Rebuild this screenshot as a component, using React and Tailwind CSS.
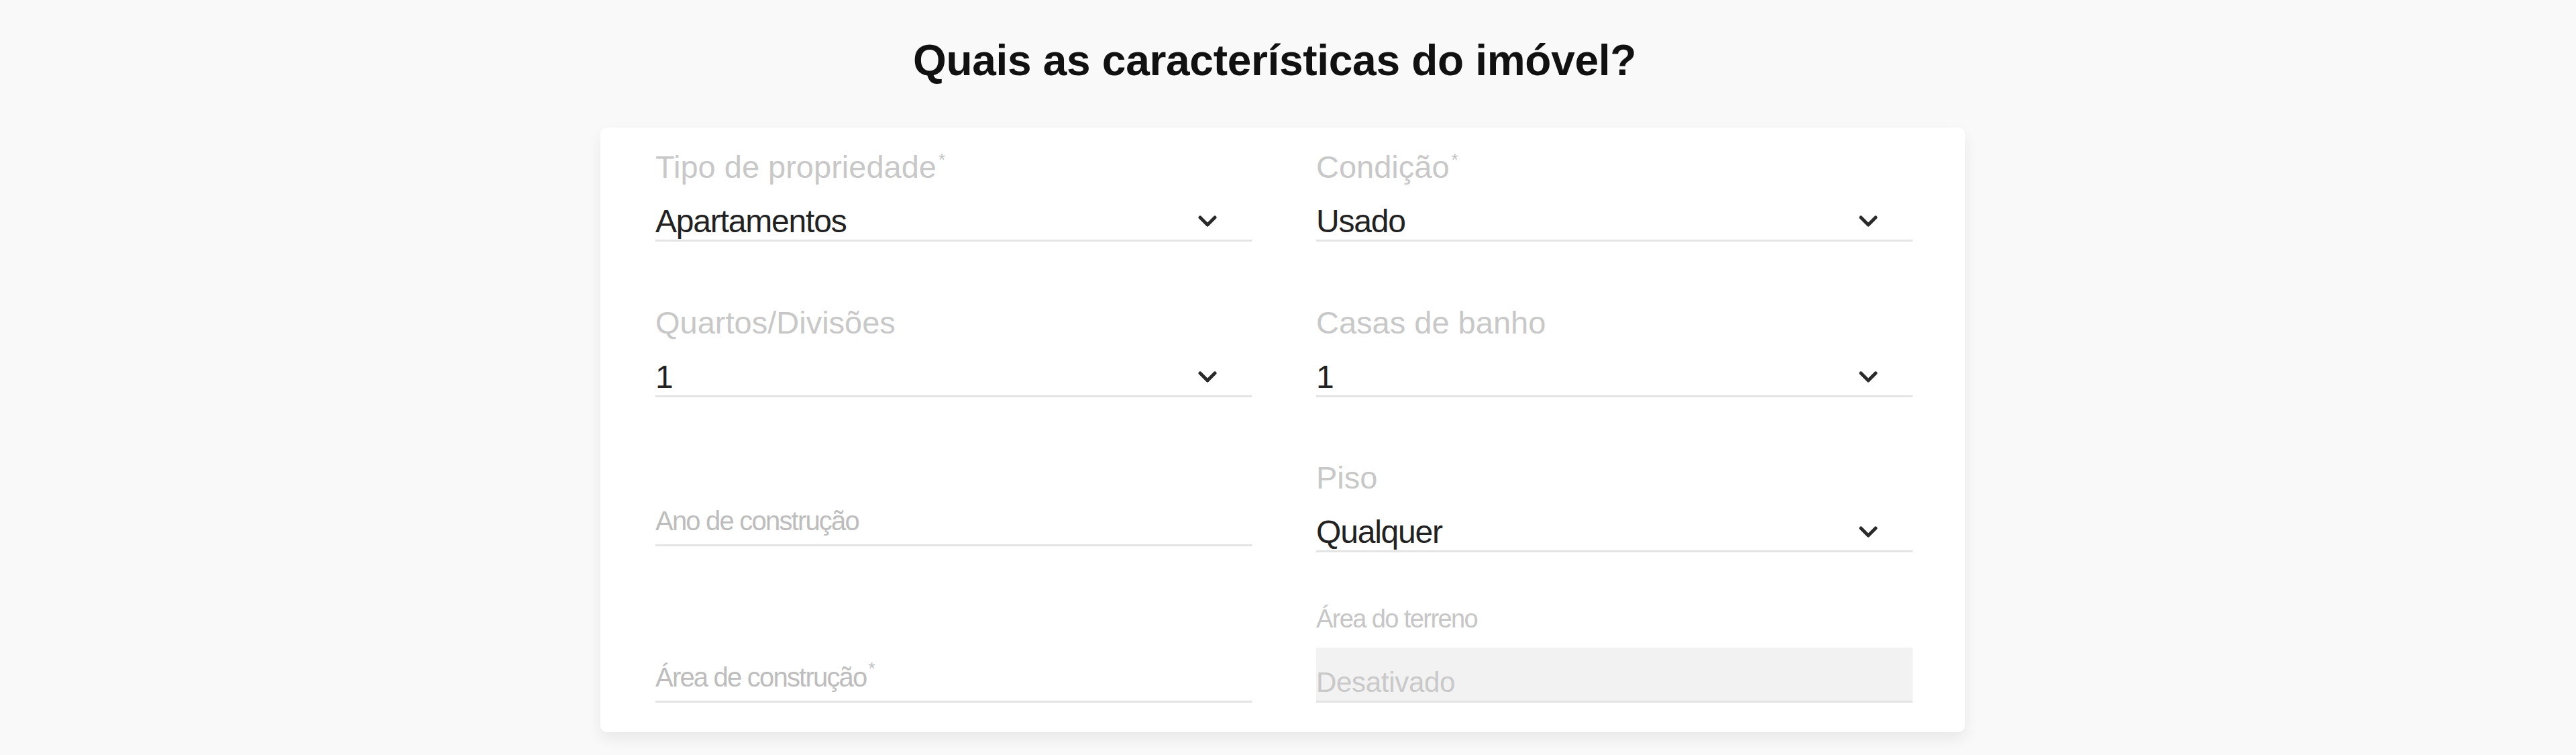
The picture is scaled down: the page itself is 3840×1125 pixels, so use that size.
const font = { fontFamily: '"Liberation Sans", Arial, sans-serif' };

const Chevron = () => (
  <svg width="28" height="18" viewBox="0 0 28 18" fill="none" className="shrink-0">
    <polyline points="3,3 14,14 25,3" stroke="#2a2a2a" strokeWidth="5" strokeLinecap="round" strokeLinejoin="round" />
  </svg>
);

const Required = () => (
  <span className="relative -top-[18px] ml-[3px] text-[26px] leading-none text-[#c2c2c2]">*</span>
);

const SelectField = ({ label, value, required }) => (
  <div className="flex flex-col">
    <div className="h-[56px] text-[47px] leading-[56px] text-[#c8c8c8] whitespace-nowrap">
      {label}
      {required && <Required />}
    </div>
    <div className="mt-[26px] flex h-[57px] items-center justify-between border-b-[3px] border-[#e4e4e4] pr-[52px]">
      <span className="text-[48px] leading-[56px] tracking-[-1.2px] text-[#222]">{value}</span>
      <Chevron />
    </div>
  </div>
);

const TextField = ({ placeholder, required, className = '' }) => (
  <div className={`border-b-[3px] border-[#e4e4e4] pb-[11px] ${className}`}>
    <div className="h-[48px] text-[40px] leading-[48px] tracking-[-1.8px] text-[#bdbdbd] whitespace-nowrap">
      {placeholder}
      {required && <Required />}
    </div>
  </div>
);

const DisabledField = ({ label, value }) => (
  <div className="flex flex-col">
    <div className="h-[46px] text-[38px] leading-[46px] tracking-[-1.6px] text-[#c6c6c6]">{label}</div>
    <div className="mt-[20px] h-[82px] bg-[#f2f2f2] border-b-[3px] border-[#e3e3e3] pt-[27px]">
      <span className="text-[42px] leading-[50px] tracking-[-0.3px] text-[#c9c9c9]">{value}</span>
    </div>
  </div>
);

export default function App() {
  return (
    <div className="min-h-screen bg-[#f9f9f9]" style={font}>
      <div className="flex justify-center pr-[16px]">
        <div className="w-[2034px]">
          <h1 className="pt-[58px] pr-[24px] text-center text-[64px] leading-[64px] font-bold tracking-[-0.3px] text-[#111]">
            Quais as características do imóvel?
          </h1>

          <div className="mt-[68px] rounded-[10px] bg-white pl-[82px] pr-[78px] pt-[31px] pb-[44px] shadow-[0_10px_22px_rgba(0,0,0,0.07)]">
            <div className="grid grid-cols-2 items-end gap-x-[96px]">
              <SelectField label="Tipo de propriedade" value="Apartamentos" required />
              <SelectField label="Condição" value="Usado" required />
            </div>

            <div className="mt-[93px] grid grid-cols-2 items-end gap-x-[96px]">
              <SelectField label="Quartos/Divisões" value="1" />
              <SelectField label="Casas de banho" value="1" />
            </div>

            <div className="mt-[92px] grid grid-cols-2 items-end gap-x-[96px]">
              <TextField placeholder="Ano de construção" className="mb-[9px]" />
              <SelectField label="Piso" value="Qualquer" />
            </div>

            <div className="mt-[76px] grid grid-cols-2 items-end gap-x-[96px]">
              <TextField placeholder="Área de construção" required />
              <DisabledField label="Área do terreno" value="Desativado" />
            </div>
          </div>
        </div>
      </div>
    </div>
  );
}
